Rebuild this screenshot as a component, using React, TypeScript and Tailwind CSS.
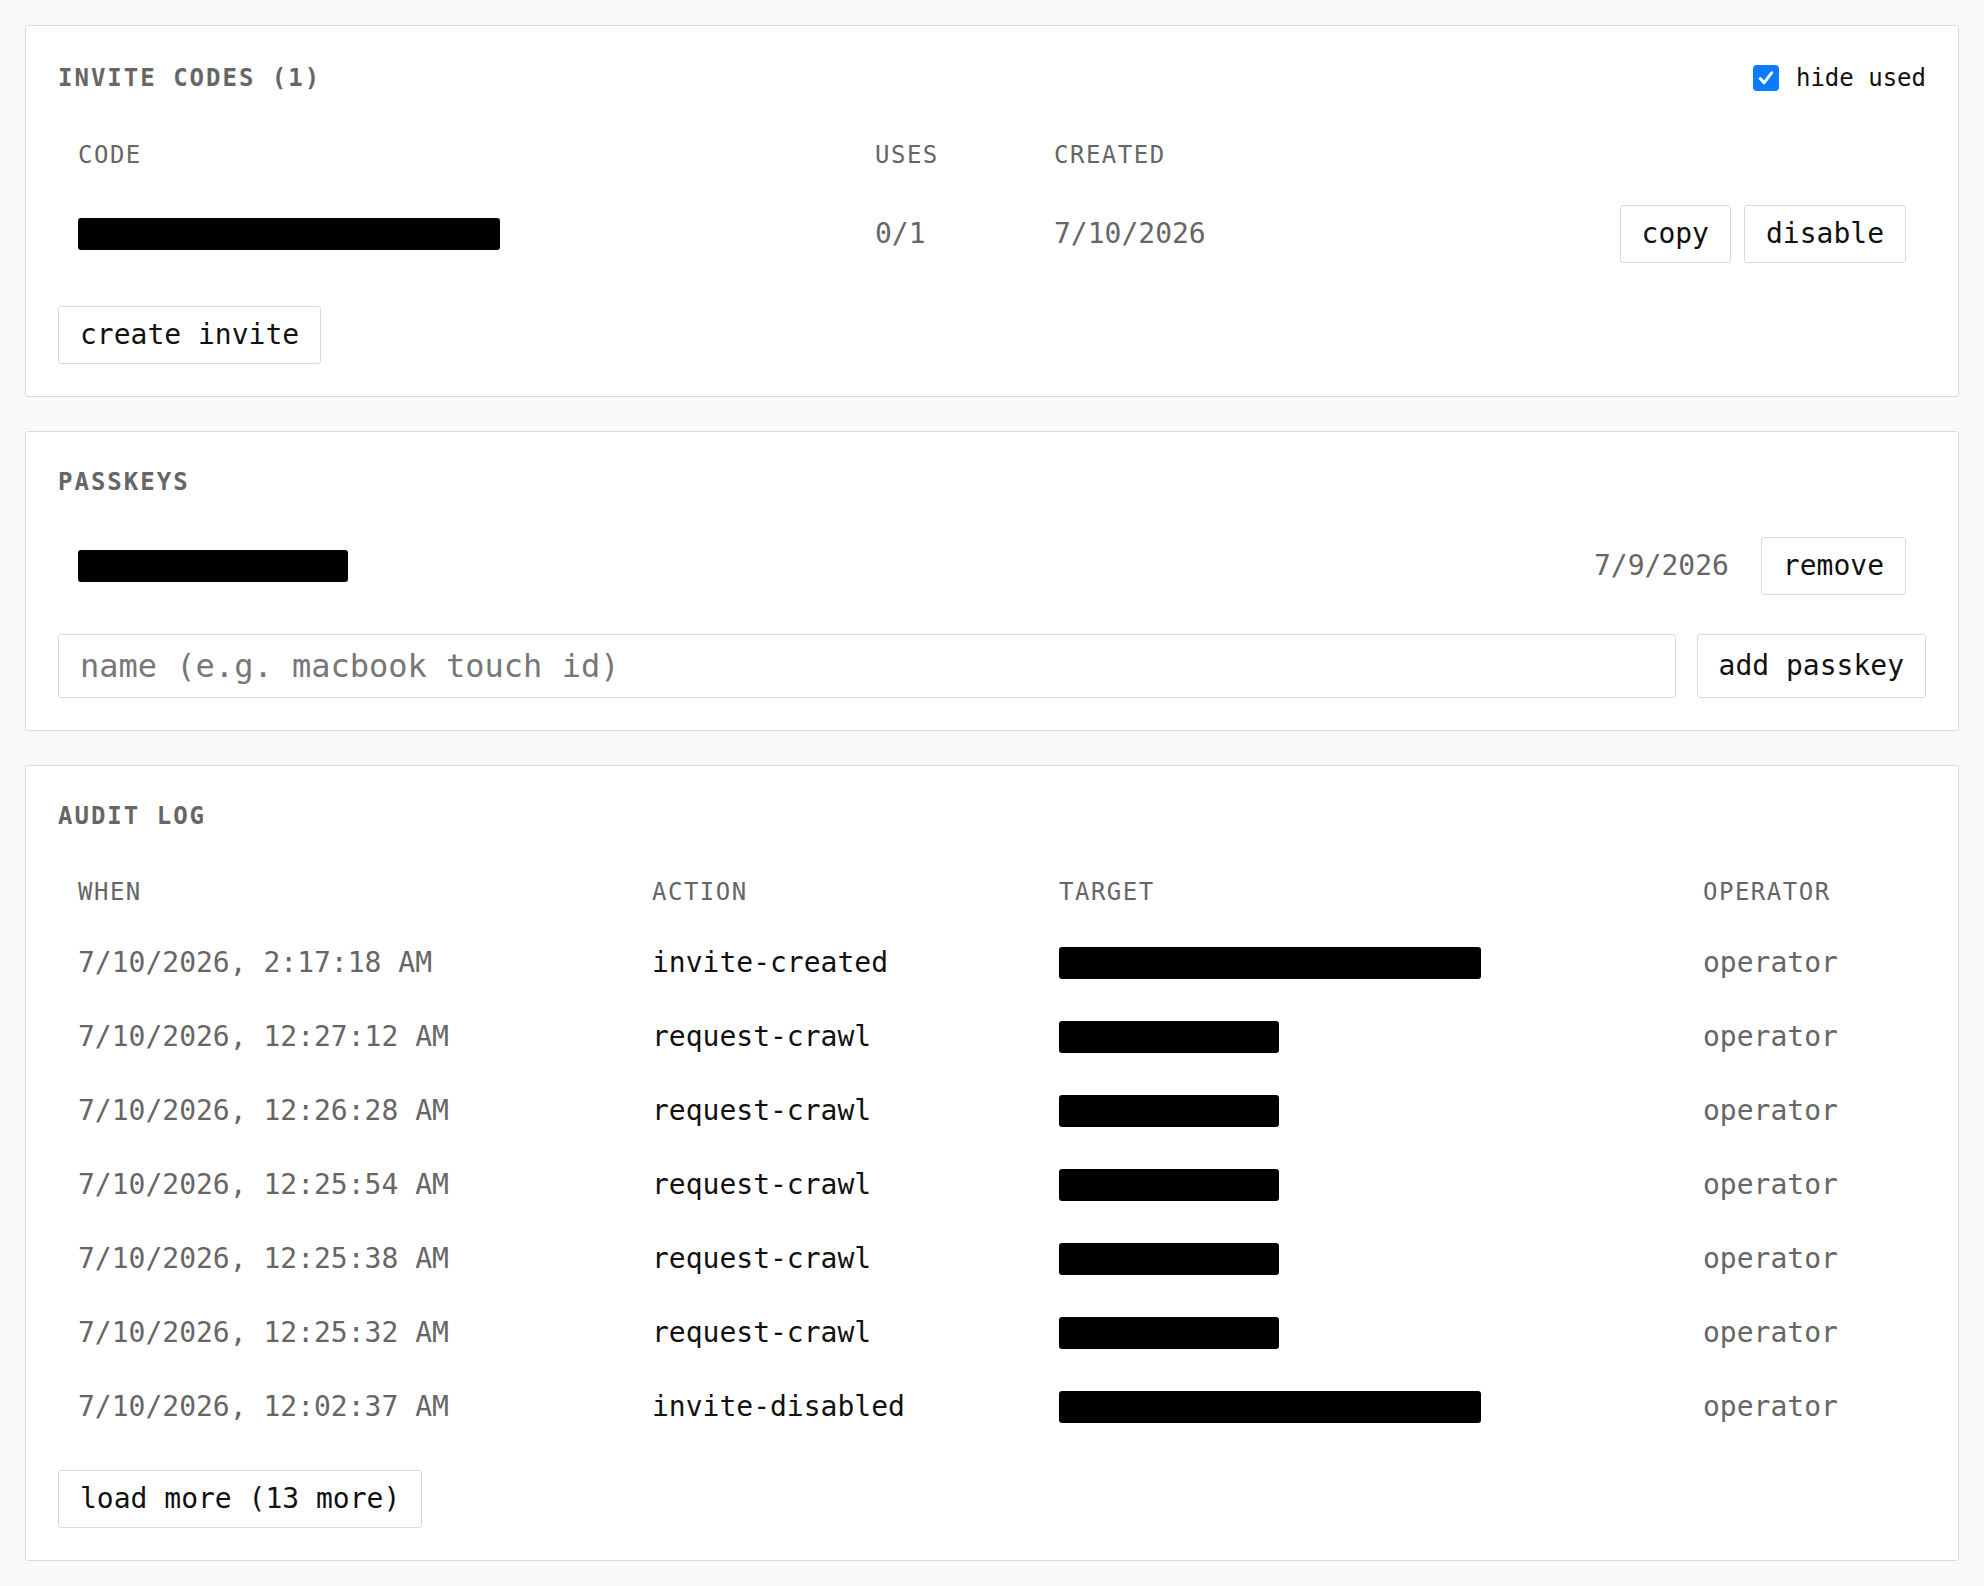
const card = 'rounded-[3px] border border-[#dadada] bg-white p-8'
const title = 'text-[24px] font-bold uppercase leading-[36px] tracking-[2px] text-[#666]'
const th = 'px-5 py-4 text-[24px] leading-[36px] tracking-[1.5px] text-[#666]'
const td = 'px-5 py-4 text-[28px] leading-[42px]'
const btn = 'rounded-[3px] border border-[#dadada] bg-white px-[21px] py-2 text-[28px] leading-[40px] text-[#111]'

interface AuditRow {
  when: string
  action: string
  long: boolean
}

const auditRows: AuditRow[] = [
  { when: '7/10/2026, 2:17:18 AM', action: 'invite-created', long: true },
  { when: '7/10/2026, 12:27:12 AM', action: 'request-crawl', long: false },
  { when: '7/10/2026, 12:26:28 AM', action: 'request-crawl', long: false },
  { when: '7/10/2026, 12:25:54 AM', action: 'request-crawl', long: false },
  { when: '7/10/2026, 12:25:38 AM', action: 'request-crawl', long: false },
  { when: '7/10/2026, 12:25:32 AM', action: 'request-crawl', long: false },
  { when: '7/10/2026, 12:02:37 AM', action: 'invite-disabled', long: true }
]

function Redacted ({ width }: { width: string }): JSX.Element {
  return <div className={`h-[32px] rounded-[3px] bg-black ${width}`} />
}

function Checkbox (): JSX.Element {
  return (
    <span className="flex h-[26px] w-[26px] items-center justify-center rounded-[4px] bg-[#0b7bff]">
      <svg width="18" height="18" viewBox="0 0 18 18" fill="none">
        <path d="M3.2 9.6 L7 13.8 L14.6 3.8" stroke="white" strokeWidth="3" strokeLinecap="round" strokeLinejoin="round" />
      </svg>
    </span>
  )
}

function InviteCodes (): JSX.Element {
  return (
    <section className={card}>
      <div className="flex h-[39px] items-center justify-between">
        <h2 className={title}>Invite codes (1)</h2>
        <label className="flex items-center gap-[17px] text-[24px] leading-[36px] text-[#111]">
          <Checkbox />
          hide used
        </label>
      </div>
      <div className="mt-6 grid grid-cols-[797px_179px_1fr_auto] items-center">
        <div className={th}>CODE</div>
        <div className={th}>USES</div>
        <div className={th}>CREATED</div>
        <div className={th}></div>
        <div className="px-5 py-4"><Redacted width="w-[422px]" /></div>
        <div className={`${td} text-[#666]`}>0/1</div>
        <div className={`${td} text-[#666]`}>7/10/2026</div>
        <div className="flex justify-end gap-[13px] px-5 py-4">
          <button className={btn}>copy</button>
          <button className={btn}>disable</button>
        </div>
      </div>
      <div className="mt-[27px] flex">
        <button className={btn}>create invite</button>
      </div>
    </section>
  )
}

function Passkeys (): JSX.Element {
  return (
    <section className={card}>
      <h2 className={title}>Passkeys</h2>
      <div className="mt-[21px] flex items-center justify-between px-5 py-4">
        <Redacted width="w-[270px]" />
        <div className="flex items-center gap-[32px]">
          <span className="text-[28px] leading-[42px] text-[#666]">7/9/2026</span>
          <button className={btn}>remove</button>
        </div>
      </div>
      <div className="mt-[23px] flex gap-[21px]">
        <input
          className="h-[64px] flex-1 rounded-[3px] border border-[#dadada] bg-white px-[21px] text-[32px] text-[#111] outline-none placeholder:text-[#777]"
          placeholder="name (e.g. macbook touch id)"
        />
        <button className="h-[64px] rounded-[3px] border border-[#dadada] bg-white px-[21px] text-[28px] text-[#111]">add passkey</button>
      </div>
    </section>
  )
}

function AuditLog (): JSX.Element {
  return (
    <section className={card}>
      <h2 className={title}>Audit log</h2>
      <div className="mt-6 grid grid-cols-[574px_407px_644px_1fr] items-center">
        <div className={th}>WHEN</div>
        <div className={th}>ACTION</div>
        <div className={th}>TARGET</div>
        <div className={th}>OPERATOR</div>
        {auditRows.map((row) => (
          <div key={row.when} className="contents">
            <div className={`${td} text-[#666]`}>{row.when}</div>
            <div className={`${td} text-[#111]`}>{row.action}</div>
            <div className="flex h-[74px] items-center px-5">
              <Redacted width={row.long ? 'w-[422px]' : 'w-[220px]'} />
            </div>
            <div className={`${td} text-[#666]`}>operator</div>
          </div>
        ))}
      </div>
      <div className="mt-[26px] flex">
        <button className={btn}>load more (13 more)</button>
      </div>
    </section>
  )
}

export default function App (): JSX.Element {
  return (
    <main className="min-h-screen bg-[#f9f9f9] p-[25px] font-['DejaVu_Sans_Mono',monospace] text-[#111]">
      <div className="flex flex-col gap-[34px]">
        <InviteCodes />
        <Passkeys />
        <AuditLog />
      </div>
    </main>
  )
}
